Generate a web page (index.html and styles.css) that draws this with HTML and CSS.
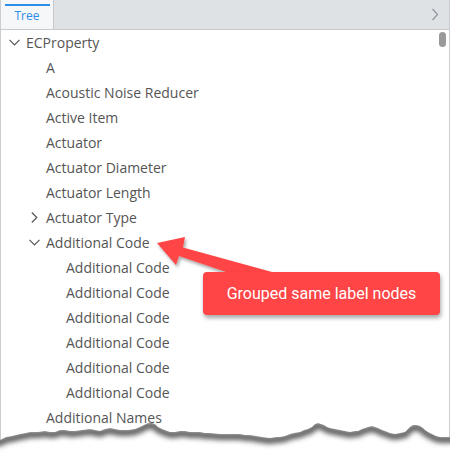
FILE: index.html
```html
<!DOCTYPE html>
<html>
<head>
<meta charset="utf-8">
<link rel="stylesheet" href="styles.css">
</head>
<body>
<div class="panel">
  <div class="header">
    <div class="tab"><span class="tab-label">Tree</span></div>
    <div class="header-spacer"></div>
    <svg class="header-chevron" width="8" height="13" viewBox="0 0 8 13"><polyline points="1.5,1 6.5,6.5 1.5,12" fill="none" stroke="#8d96a0" stroke-width="1.2"/></svg>
  </div>
  <div class="body">
    <div class="tree">
      <div class="row lvl0"><span class="toggle"><svg width="11" height="7" viewBox="0 0 11 7"><polyline points="0.5,0.8 5.5,5.8 10.5,0.8" fill="none" stroke="#555" stroke-width="1.2"/></svg></span><span class="label">ECProperty</span></div>
      <div class="row lvl1"><span class="toggle"></span><span class="label">A</span></div>
      <div class="row lvl1"><span class="toggle"></span><span class="label">Acoustic Noise Reducer</span></div>
      <div class="row lvl1"><span class="toggle"></span><span class="label">Active Item</span></div>
      <div class="row lvl1"><span class="toggle"></span><span class="label">Actuator</span></div>
      <div class="row lvl1"><span class="toggle"></span><span class="label">Actuator Diameter</span></div>
      <div class="row lvl1"><span class="toggle"></span><span class="label">Actuator Length</span></div>
      <div class="row lvl1"><span class="toggle"><svg width="7" height="11" viewBox="0 0 7 11"><polyline points="0.8,0.5 5.8,5.5 0.8,10.5" fill="none" stroke="#555" stroke-width="1.2"/></svg></span><span class="label">Actuator Type</span></div>
      <div class="row lvl1"><span class="toggle"><svg width="11" height="7" viewBox="0 0 11 7"><polyline points="0.5,0.8 5.5,5.8 10.5,0.8" fill="none" stroke="#555" stroke-width="1.2"/></svg></span><span class="label">Additional Code</span></div>
      <div class="row lvl2"><span class="toggle"></span><span class="label">Additional Code</span></div>
      <div class="row lvl2"><span class="toggle"></span><span class="label">Additional Code</span></div>
      <div class="row lvl2"><span class="toggle"></span><span class="label">Additional Code</span></div>
      <div class="row lvl2"><span class="toggle"></span><span class="label">Additional Code</span></div>
      <div class="row lvl2"><span class="toggle"></span><span class="label">Additional Code</span></div>
      <div class="row lvl2"><span class="toggle"></span><span class="label">Additional Code</span></div>
      <div class="row lvl1"><span class="toggle"></span><span class="label">Additional Names</span></div>
      <div class="row lvl1"><span class="toggle"></span><span class="label">Additional Notes</span></div>
    </div>
    <div class="scrollbar"><div class="thumb"></div></div>
  </div>
</div>

<svg class="arrow" width="450" height="453" viewBox="0 0 450 453">
  <defs>
    <filter id="ash" x="-20%" y="-20%" width="140%" height="160%">
      <feDropShadow dx="1.5" dy="2.5" stdDeviation="1.5" flood-color="#000" flood-opacity="0.35"/>
    </filter>
  </defs>
  <polygon filter="url(#ash)" fill="#ff4545" points="157,243 185,237 183,247.5 272,272 272,284 236,284 226,272 179,256 176,265"/>
</svg>

<div class="callout">Grouped same label nodes</div>

<svg class="torn" width="450" height="40" viewBox="0 413 450 40">
  <defs>
    <clipPath id="below">
      <path d="M-5,441 L0,440 L6,437 L12,436 L20,434 L26,433 L30,432 L38,432 L45,431 L50,432 L55,432 L60,430 L65,430 L70,431 L75,431 L82,430 L90,429 L95,430 L100,431 L105,429 L110,428 L115,429 L120,430 L128,430 L135,429 L140,427 L144,425 L148,423 L152,423 L155,424 L158,427 L162,429 L170,432 L175,432 L180,431 L185,431 L190,432 L200,432 L205,433 L210,433 L220,434 L230,434 L240,434 L245,435 L250,435 L256,436 L262,437 L270,438 L276,437 L280,437 L285,436 L290,434 L294,433 L300,432 L304,430 L308,429 L312,427 L315,424 L318,423 L321,424 L324,425 L327,427 L330,428 L335,429 L340,430 L345,431 L350,432 L355,431 L358,431 L362,429 L365,428 L368,427 L372,426 L375,427 L378,428 L382,430 L385,431 L390,433 L395,434 L400,433 L405,432 L408,429 L410,427 L413,425 L417,425 L420,426 L423,428 L425,430 L428,432 L432,434 L436,436 L440,437 L455,437 L455,460 L-5,460 Z"/>
    </clipPath>
    <filter id="blur" x="-5%" y="-50%" width="110%" height="200%"><feGaussianBlur stdDeviation="2.5"/></filter>
  </defs>
  <g clip-path="url(#below)">
    <rect x="-5" y="410" width="460" height="50" fill="#fff"/>
    <path filter="url(#blur)" fill="none" stroke="#5e5e5e" stroke-width="7" transform="translate(0,2.5)" d="M-5,441 L0,440 L6,437 L12,436 L20,434 L26,433 L30,432 L38,432 L45,431 L50,432 L55,432 L60,430 L65,430 L70,431 L75,431 L82,430 L90,429 L95,430 L100,431 L105,429 L110,428 L115,429 L120,430 L128,430 L135,429 L140,427 L144,425 L148,423 L152,423 L155,424 L158,427 L162,429 L170,432 L175,432 L180,431 L185,431 L190,432 L200,432 L205,433 L210,433 L220,434 L230,434 L240,434 L245,435 L250,435 L256,436 L262,437 L270,438 L276,437 L280,437 L285,436 L290,434 L294,433 L300,432 L304,430 L308,429 L312,427 L315,424 L318,423 L321,424 L324,425 L327,427 L330,428 L335,429 L340,430 L345,431 L350,432 L355,431 L358,431 L362,429 L365,428 L368,427 L372,426 L375,427 L378,428 L382,430 L385,431 L390,433 L395,434 L400,433 L405,432 L408,429 L410,427 L413,425 L417,425 L420,426 L423,428 L425,430 L428,432 L432,434 L436,436 L440,437 L455,437"/>
  </g>
</svg>
</body>
</html>
```

FILE: styles.css
```css
html, body {
  margin: 0;
  padding: 0;
  background: #fff;
  width: 450px;
  height: 453px;
  overflow: hidden;
  position: relative;
}

.panel {
  width: 448px;
  height: 453px;
  border-left: 1px solid #c9cdd1;
  border-right: 1px solid #c9cdd1;
  display: flex;
  flex-direction: column;
  font-family: "Open Sans", sans-serif;
}

.header {
  height: 29px;
  background: #dfe2e5;
  border-bottom: 1px solid #c6cacd;
  display: flex;
  align-items: center;
  flex: none;
}

.tab {
  width: 53px;
  height: 29px;
  box-sizing: border-box;
  background: #f6f7f8;
  border-right: 1px solid #c6cacd;
  display: flex;
  justify-content: center;
  align-items: center;
  position: relative;
  padding-top: 2px;
}

.tab::before {
  content: "";
  position: absolute;
  left: 4px;
  right: 3px;
  top: 4px;
  height: 2px;
  background: #2b8ee8;
}

.tab-label {
  color: #2b8ee8;
  font-size: 12px;
}

.header-spacer {
  flex: 1;
}

.header-chevron {
  margin-right: 10px;
  display: block;
}

.body {
  flex: 1;
  display: flex;
  overflow: hidden;
}

.tree {
  flex: 1;
  padding-top: 0;
}

.row {
  height: 25px;
  display: flex;
  align-items: center;
  font-size: 14px;
  color: #555;
  white-space: nowrap;
}

.row.lvl0 { padding-left: 4px; }
.row.lvl1 { padding-left: 24px; }
.row.lvl2 { padding-left: 44px; }

.toggle {
  width: 18px;
  margin-right: 3px;
  display: flex;
  justify-content: center;
  align-items: center;
}

.toggle svg {
  display: block;
}

.scrollbar {
  width: 12px;
  flex: none;
  padding-top: 2px;
}

.thumb {
  width: 7px;
  height: 15px;
  margin-left: 2px;
  border-radius: 4px;
  background: #9a9a9a;
}

.arrow {
  position: absolute;
  left: 0;
  top: 0;
  pointer-events: none;
}

.callout {
  position: absolute;
  left: 203px;
  top: 272px;
  width: 237px;
  height: 43px;
  background: #ff4545;
  border-radius: 4px;
  box-shadow: 1px 3px 4px rgba(0, 0, 0, 0.35);
  color: #fff;
  font-family: Roboto, "Liberation Sans", sans-serif;
  font-size: 16px;
  display: flex;
  align-items: center;
  justify-content: center;
}

.torn {
  position: absolute;
  left: 0;
  top: 413px;
}
```
